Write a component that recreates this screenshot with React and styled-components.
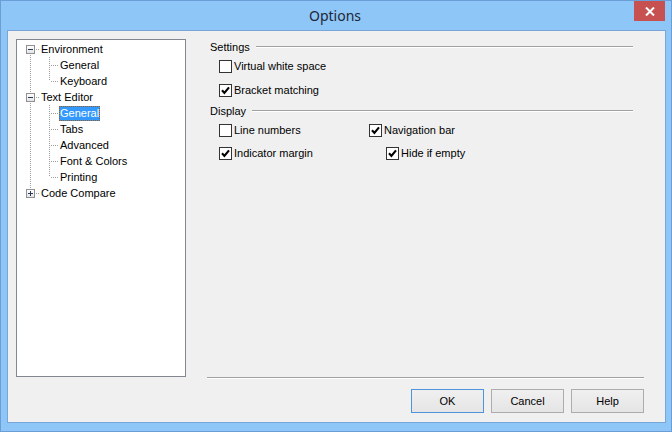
import React from "react";
import styled, { createGlobalStyle, css } from "styled-components";

const GlobalStyle = createGlobalStyle`
  html, body {
    margin: 0;
    padding: 0;
    background: #ffffff;
  }
  body {
    font-family: "Liberation Sans", Arial, sans-serif;
    font-size: 11px;
    color: #000;
  }
`;

const Window = styled.div`
  width: 672px;
  height: 432px;
  box-sizing: border-box;
  border: 1px solid #6b9ed6;
  background: #8ec6f7;
  display: flex;
  flex-direction: column;
  overflow: hidden;
`;

const TitleBar = styled.div`
  height: 29px;
  flex-shrink: 0;
  display: grid;
  grid-template-columns: 1fr auto 1fr;
  padding-right: 6px;
`;

const Title = styled.div`
  grid-column: 2;
  align-self: center;
  font-family: "Noto Sans", "Open Sans", sans-serif;
  font-size: 14px;
  color: #1e2735;
  line-height: 20px;
  margin: 1px 0 0 4px;
`;

const CloseButton = styled.div`
  grid-column: 3;
  justify-self: end;
  align-self: start;
  width: 31px;
  height: 20px;
  background: #c75050;
  display: flex;
  align-items: center;
  justify-content: center;
`;

const Client = styled.div`
  margin: 0 5px 8px 6px;
  border: 1px solid #78a6d8;
  background: #f0f0f0;
  flex: 1;
  display: grid;
  grid-template-columns: 170px 1fr;
  grid-template-rows: 338px auto;
  column-gap: 21px;
  padding: 8px 21px 9px 8px;
`;

const Tree = styled.div`
  box-sizing: border-box;
  border: 1px solid #828790;
  background: #fff;
  padding: 1px 0 0 4px;
`;

const TreeRow = styled.div`
  display: flex;
  height: 16px;
  align-items: center;
`;

const dots = (dir) => css`
  background-image: linear-gradient(${dir}, #a0a0a0 50%, transparent 50%);
`;

const Gutter = styled.span`
  position: relative;
  width: 19px;
  height: 16px;
  flex-shrink: 0;

  &::before {
    content: "";
    display: ${(p) => (p.$v === "none" ? "none" : "block")};
    position: absolute;
    left: 9px;
    width: 1px;
    top: ${(p) => (p.$v === "bottom" ? "8px" : "0")};
    height: ${(p) => (p.$v === "full" ? "16px" : "8px")};
    ${dots("to bottom")};
    background-size: 1px 2px;
  }

  &::after {
    content: "";
    display: ${(p) => (p.$h ? "block" : "none")};
    position: absolute;
    top: 8px;
    left: 11px;
    right: 0;
    height: 1px;
    ${dots("to right")};
    background-size: 2px 1px;
  }
`;

const Expander = styled.span`
  position: absolute;
  z-index: 1;
  left: 5px;
  top: 4px;
  width: 9px;
  height: 9px;
  box-sizing: border-box;
  border: 1px solid #919191;
  background: linear-gradient(#ffffff, #e4e4e4);

  &::before {
    content: "";
    position: absolute;
    left: 1px;
    top: 3px;
    width: 5px;
    height: 1px;
    background: #2b3a55;
  }

  &::after {
    content: "";
    display: ${(p) => (p.$open ? "none" : "block")};
    position: absolute;
    left: 3px;
    top: 1px;
    width: 1px;
    height: 5px;
    background: #2b3a55;
  }
`;

const NodeLabel = styled.span`
  height: 15px;
  line-height: 13px;
  box-sizing: border-box;
  border: 1px ${(p) => (p.$selected ? "dotted #9a5b17" : "solid transparent")};
  background: ${(p) => (p.$selected ? "#3399ff" : "transparent")};
  color: ${(p) => (p.$selected ? "#fff" : "#000")};
  white-space: nowrap;
`;

const Pane = styled.div`
  display: flex;
  flex-direction: column;
`;

const GroupHeader = styled.div`
  display: flex;
  align-items: center;
  height: 16px;
  padding: 0 11px 0 3px;
  margin-top: ${(p) => p.$top || 0}px;
`;

const GroupLine = styled.div`
  flex: 1;
  margin-left: 6px;
  border-top: 1px solid #a0a0a0;
  border-bottom: 1px solid #ffffff;
`;

const OptionRow = styled.div`
  display: flex;
  align-items: center;
  height: 23px;
  padding-left: 12px;
  margin-top: ${(p) => p.$top || 0}px;
`;

const Option = styled.label`
  display: flex;
  align-items: center;
  gap: 2px;
  width: ${(p) => (p.$width ? `${p.$width}px` : "auto")};
  white-space: nowrap;
  line-height: 13px;
`;

const Box = styled.span`
  width: 13px;
  height: 13px;
  box-sizing: border-box;
  border: 1px solid #333;
  background: #fff;
  flex-shrink: 0;
  display: flex;
  align-items: center;
  justify-content: center;
`;

const Footer = styled.div`
  grid-column: 2;
`;

const Separator = styled.div`
  border-top: 1px solid #a0a0a0;
  border-bottom: 1px solid #ffffff;
`;

const ButtonRow = styled.div`
  display: flex;
  justify-content: flex-end;
  gap: 7px;
  margin-top: 10px;
`;

const Button = styled.button`
  width: 73px;
  height: 24px;
  box-sizing: border-box;
  border: 1px solid ${(p) => (p.$default ? "#4f93dc" : "#adadad")};
  background: linear-gradient(#f0f0f0, #e5e5e5);
  font-family: inherit;
  font-size: 11px;
  color: #000;
  padding: 0;
`;

const tree = [
  { label: "Environment", open: true, children: ["General", "Keyboard"] },
  {
    label: "Text Editor",
    open: true,
    children: ["General", "Tabs", "Advanced", "Font & Colors", "Printing"],
    selected: 0,
  },
  { label: "Code Compare", open: false, children: [] },
];

const Check = ({ checked }) => (
  <Box>
    {checked && (
      <svg width="9" height="9" viewBox="0 0 9 9">
        <path d="M1 4.3 L3.4 7 L8 1.3" fill="none" stroke="#000" strokeWidth="2.1" />
      </svg>
    )}
  </Box>
);

const TreeView = () => {
  const rows = [];
  tree.forEach((node, i) => {
    const last = i === tree.length - 1;
    const rootLine = i === 0 ? "bottom" : last ? "top" : "full";
    rows.push(
      <TreeRow key={node.label}>
        <Gutter $v={rootLine} $h>
          <Expander $open={node.open} />
        </Gutter>
        <NodeLabel>{node.label}</NodeLabel>
      </TreeRow>
    );
    if (node.open) {
      node.children.forEach((child, j) => {
        const lastChild = j === node.children.length - 1;
        rows.push(
          <TreeRow key={node.label + child}>
            <Gutter $v={last ? "none" : "full"} />
            <Gutter $v={lastChild ? "top" : "full"} $h />
            <NodeLabel $selected={node.selected === j}>{child}</NodeLabel>
          </TreeRow>
        );
      });
    }
  });
  return <Tree>{rows}</Tree>;
};

export default function App() {
  return (
    <>
      <GlobalStyle />
      <Window>
        <TitleBar>
          <Title>Options</Title>
          <CloseButton>
            <svg width="10" height="9" viewBox="0 0 10 9">
              <path d="M1 0.5 L9 8.5 M9 0.5 L1 8.5" stroke="#fff" strokeWidth="2" />
            </svg>
          </CloseButton>
        </TitleBar>
        <Client>
          <TreeView />
          <Pane>
            <GroupHeader>
              Settings
              <GroupLine />
            </GroupHeader>
            <OptionRow>
              <Option>
                <Check />
                Virtual white space
              </Option>
            </OptionRow>
            <OptionRow $top={1}>
              <Option>
                <Check checked />
                Bracket matching
              </Option>
            </OptionRow>
            <GroupHeader $top={1}>
              Display
              <GroupLine />
            </GroupHeader>
            <OptionRow>
              <Option $width={150}>
                <Check />
                Line numbers
              </Option>
              <Option>
                <Check checked />
                Navigation bar
              </Option>
            </OptionRow>
            <OptionRow>
              <Option $width={167}>
                <Check checked />
                Indicator margin
              </Option>
              <Option>
                <Check checked />
                Hide if empty
              </Option>
            </OptionRow>
          </Pane>
          <Footer>
            <Separator />
            <ButtonRow>
              <Button $default>OK</Button>
              <Button>Cancel</Button>
              <Button>Help</Button>
            </ButtonRow>
          </Footer>
        </Client>
      </Window>
    </>
  );
}
